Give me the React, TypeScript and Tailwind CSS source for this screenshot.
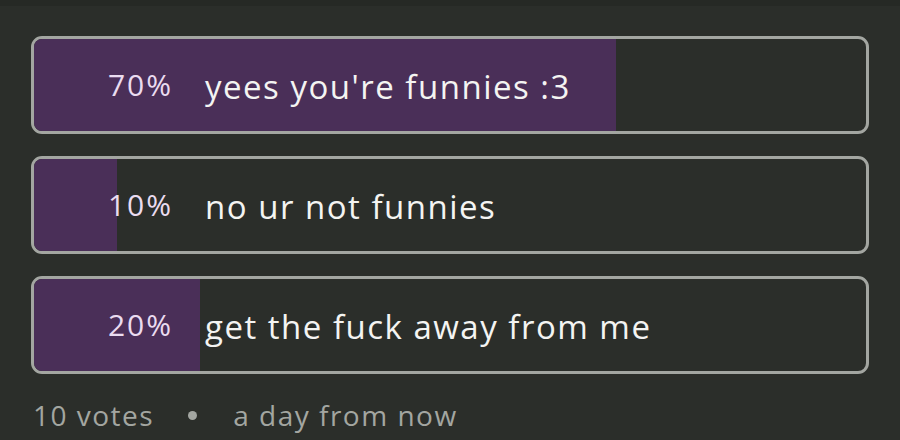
const options = [
  { pct: 70, label: "yees you're funnies :3" },
  { pct: 10, label: 'no ur not funnies' },
  { pct: 20, label: 'get the fuck away from me' },
];

export default function App() {
  return (
    <div
      className="h-[440px] w-[900px] overflow-hidden bg-[#2b2e2a]"
      style={{ fontFamily: '"Open Sans", Lato, sans-serif' }}
    >
      <div className="h-[6px] bg-[#262925]" />
      <div className="flex flex-col gap-[22px] px-[31px] pt-[30px]">
        {options.map((o) => (
          <div
            key={o.label}
            className="relative h-[98px] overflow-hidden rounded-[11px] border-[3px] border-[#a3a6a1]"
          >
            <div className="absolute inset-y-0 left-0 bg-[#4a2f58]" style={{ width: `${o.pct}%` }} />
            <div className="relative flex h-full items-center pt-[4px]">
              <span className="w-[139px] pb-[6px] text-right text-[30px] tracking-[2px] text-[#eadcf0]">{o.pct}%</span>
              <span className="ml-[32px] text-[33px] tracking-[1.5px] text-[#f4f4f2]">{o.label}</span>
            </div>
          </div>
        ))}
      </div>
      <div className="flex items-center px-[33px] pt-[20px] text-[28px] tracking-[1.5px] text-[#a3a6a1]">
        <span>10 votes</span>
        <span className="ml-[34px] h-[9px] w-[9px] rounded-full bg-[#a3a6a1]" />
        <span className="ml-[36px]">a day from now</span>
      </div>
    </div>
  );
}
